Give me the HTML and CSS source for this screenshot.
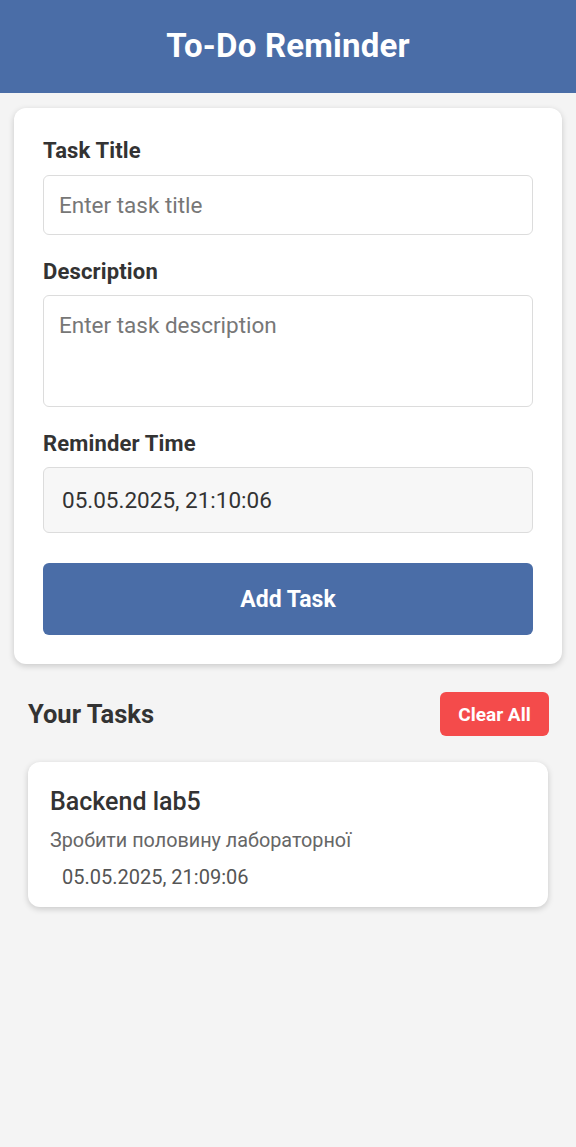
FILE: index.html
```html
<!DOCTYPE html>
<html lang="uk">
<head>
<meta charset="utf-8">
<title>To-Do Reminder</title>
<link rel="stylesheet" href="styles.css">
</head>
<body>
<header class="app-header">
  <h1 class="app-title">To-Do Reminder</h1>
</header>
<main class="content">
  <form class="card form-card">
    <div class="field">
      <label class="field-label" for="title">Task Title</label>
      <input class="input input-title" id="title" type="text" placeholder="Enter task title">
    </div>
    <div class="field field-desc">
      <label class="field-label" for="desc">Description</label>
      <textarea class="input input-desc" id="desc" placeholder="Enter task description"></textarea>
    </div>
    <div class="field field-last">
      <label class="field-label" for="time">Reminder Time</label>
      <div class="input input-time" id="time">05.05.2025, 21:10:06</div>
    </div>
    <button type="button" class="btn-add">Add Task</button>
  </form>

  <section class="tasks">
    <div class="tasks-head">
      <h2 class="tasks-title">Your Tasks</h2>
      <button type="button" class="btn-clear">Clear All</button>
    </div>
    <article class="card task-card">
      <h3 class="task-name">Backend lab5</h3>
      <p class="task-desc">Зробити половину лабораторної</p>
      <p class="task-time">05.05.2025, 21:09:06</p>
    </article>
  </section>
</main>
</body>
</html>
```
FILE: styles.css
```css
* { box-sizing: border-box; }
html, body { margin: 0; padding: 0; }
body {
  background: #f4f4f4;
  font-family: Roboto, "Noto Sans", "Liberation Sans", sans-serif;
  color: #333;
  min-height: 1147px;
}
.app-header {
  background: #4a6da7;
  height: 93px;
  display: flex;
  align-items: center;
  justify-content: center;
}
.app-title {
  margin: 0;
  color: #fff;
  font-size: 33px;
  letter-spacing: 0.2px;
  font-weight: 700;
  line-height: 1;
  padding-bottom: 2px;
}
.content { padding: 15px 14px; }
.card {
  background: #fff;
  border-radius: 12px;
  box-shadow: 0 2px 6px rgba(0,0,0,0.18);
}
.form-card {
  display: flex;
  flex-direction: column;
  padding: 30px 29px 29px;
}
.field {
  display: flex;
  flex-direction: column;
  gap: 11px;
  margin-bottom: 24px;
}
.field-desc { gap: 10px; }
.field-last { gap: 10px; margin-bottom: 30px; }
.field-label {
  font-size: 22px;
  letter-spacing: 0.15px;
  line-height: 26px;
  font-weight: 700;
  color: #333;
}
.input {
  width: 100%;
  border: 1px solid #dcdcdc;
  border-radius: 6px;
  background: #fff;
  font-family: inherit;
  font-size: 22.5px;
  color: #333;
  padding: 0 15px;
  outline: none;
}
.input::placeholder { color: #777; }
.input-title { height: 60px; }
.input-desc {
  height: 112px;
  resize: none;
  padding-top: 16px;
  line-height: 27px;
}
.input-time {
  height: 66px;
  background: #f7f7f7;
  display: flex;
  align-items: center;
  padding-left: 18px;
}
.btn-add {
  height: 72px;
  border: 0;
  border-radius: 6px;
  background: #4a6da7;
  color: #fff;
  font-family: inherit;
  font-size: 23px;
  font-weight: 700;
}
.tasks { margin-top: 28px; padding: 0 14px; }
.tasks-head {
  display: flex;
  align-items: center;
  justify-content: space-between;
  height: 44px;
}
.tasks-title {
  margin: 0;
  font-size: 25.5px;
  font-weight: 700;
  color: #333;
}
.btn-clear {
  width: 109px;
  height: 44px;
  border: 0;
  border-radius: 6px;
  background: #f44b4b;
  color: #fff;
  font-family: inherit;
  font-size: 19px;
  font-weight: 700;
  margin-right: -1px;
}
.task-card {
  margin-top: 26px;
  padding: 25px 22px 18px;
}
.task-name {
  margin: 0;
  font-size: 25px;
  font-weight: 500;
  color: #333;
  line-height: 30px;
}
.task-desc {
  margin: 12px 0 0;
  font-size: 19.8px;
  color: #666;
  line-height: 24px;
}
.task-time {
  margin: 12px 0 0 12px;
  font-size: 20px;
  color: #555;
  line-height: 24px;
}
```
